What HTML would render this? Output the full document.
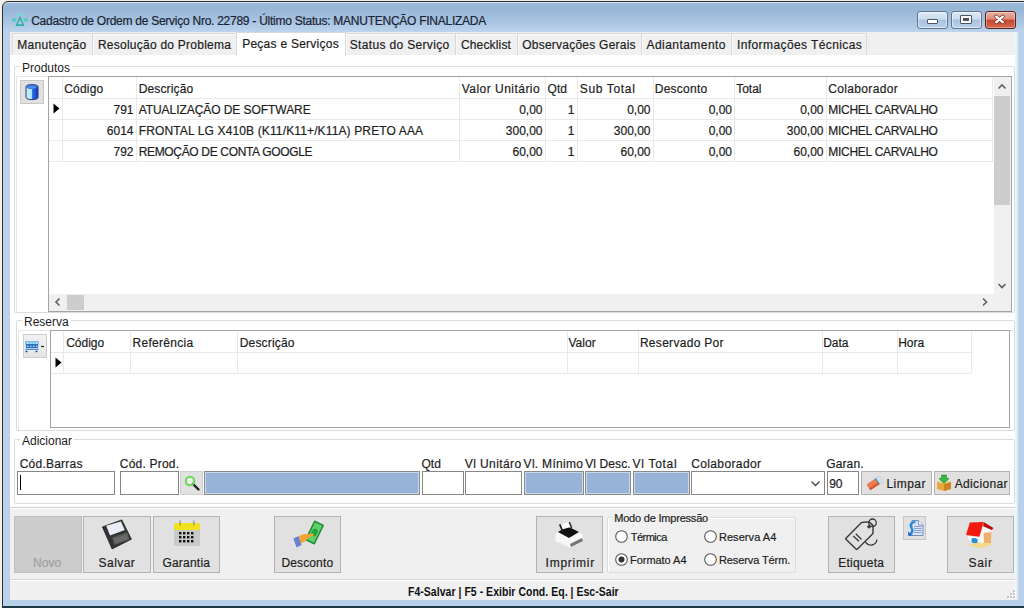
<!DOCTYPE html>
<html><head><meta charset="utf-8"><style>
*{box-sizing:border-box;margin:0;padding:0}
html,body{width:1024px;height:608px;overflow:hidden;background:#f3f1ea;font-family:"Liberation Sans",sans-serif;font-size:12px;color:#1e1e1e}
.a{position:absolute}
.t{position:absolute;white-space:pre;line-height:14px}
.r{text-align:right}
#win{position:absolute;left:2px;top:1px;width:1030px;height:607px;border:1px solid #2b2f36;border-radius:6px 6px 0 0;box-shadow:inset 0 1px 0 #d6e4f2;background:linear-gradient(#9fbad6 0px,#97b6d6 6px,#a6c2e0 18px,#bcd4ec 30px);}
#content{position:absolute;left:10px;top:32px;width:1008px;height:568px;background:#f0f0f0}
#bframe{position:absolute;left:3px;top:600px;width:1021px;height:6px;background:#b8d0ea}
#bline{position:absolute;left:2px;top:606px;width:1022px;height:2px;background:#1d3b44}
#lframe{position:absolute;left:3px;top:30px;width:7px;height:570px;background:#b9d1ea}
#rframe{position:absolute;left:1018px;top:30px;width:6px;height:570px;background:#b9d1ea}
.tab{position:absolute;top:33px;height:22px;background:#f0f0f0;border:1px solid #d9d9d9;border-bottom:none;box-shadow:inset 1px 1px 0 #f8f8f8}
.gb{position:absolute;border:1px solid #dcdcdc;border-radius:2px;box-shadow:inset 1px 1px 0 #fff}
.gbl{position:absolute;background:#fff;padding:0 2px;white-space:pre;line-height:14px}
.grid{position:absolute;background:#fff;border:1px solid #a0a0a0}
.btn{position:absolute;background:#e1e1e1;border:1px solid #adadad}
.inp{position:absolute;background:#fff;border:1px solid #7a7a7a;height:24px;top:471px}
.ro{position:absolute;background:#95b3d7;border:1px solid #8a8a8a;box-shadow:inset 0 0 0 1px #e8eef6;height:24px;top:471px}
.hl{position:absolute;height:1px;background:#f0f0f0}
.vl{position:absolute;width:1px;background:#f0f0f0}
</style></head><body>
<div id="win"></div><div id="lframe"></div><div id="rframe"></div><div id="content"></div>
<svg class="a" style="left:10px;top:11px" width="20" height="16" viewBox="0 0 20 16">
 <rect x="6" y="2.6" width="8" height="1.8" fill="#74dcd6"/>
 <ellipse cx="4.3" cy="8.8" rx="2.4" ry="1.9" fill="#4fcfc4"/>
 <ellipse cx="15.8" cy="8.8" rx="2.4" ry="1.9" fill="#4fcfc4"/>
 <path d="M10 4.8 L14.6 15 L5.4 15 Z M10 8.6 L7.6 13.3 L12.4 13.3 Z" fill="#2fae9f" fill-rule="evenodd"/>
 <path d="M6.5 8.8 L8.4 8.8 M11.6 8.8 L13.5 8.8" stroke="#7fd9d2" stroke-width="1"/>
</svg>
<div class="t" style="left:31.20px;top:14px;letter-spacing:-0.257px;-webkit-text-stroke:0.2px currentColor;color:#1b2433;">Cadastro de Ordem de Serviço Nro. 22789 - Último Status: MANUTENÇÃO FINALIZADA</div>
<div class="a" style="left:917px;top:11px;width:31px;height:18px;border:1px solid #5f7592;border-radius:3px;background:linear-gradient(#dde9f6 0,#c9dbee 45%,#a9c2df 50%,#bcd1ea 100%);box-shadow:inset 0 0 0 1px rgba(255,255,255,.5)"></div>
<div class="a" style="left:927px;top:19px;width:11px;height:5px;background:#fff;border:1px solid #4b5566;border-radius:1px"></div>
<div class="a" style="left:951px;top:11px;width:31px;height:18px;border:1px solid #5f7592;border-radius:3px;background:linear-gradient(#dde9f6 0,#c9dbee 45%,#a9c2df 50%,#bcd1ea 100%);box-shadow:inset 0 0 0 1px rgba(255,255,255,.5)"></div>
<div class="a" style="left:960px;top:15px;width:12px;height:9px;background:#fff;border:1px solid #4b5566;border-radius:1px"></div>
<div class="a" style="left:963px;top:18px;width:6px;height:3px;background:#4b5566"></div>
<div class="a" style="left:985px;top:11px;width:31px;height:18px;border:1px solid #58231f;border-radius:3px;background:linear-gradient(#eab3a5 0,#dd8a76 45%,#c8442c 50%,#d46a4e 100%);box-shadow:inset 0 0 0 1px rgba(255,255,255,.35)"></div>
<svg class="a" style="left:992px;top:13px" width="15" height="13" viewBox="0 0 15 13"><path d="M4.2 3.6 L10.8 9.2 M10.8 3.6 L4.2 9.2" stroke="#7a3a2e" stroke-width="3.8" stroke-linecap="round"/><path d="M4.2 3.6 L10.8 9.2 M10.8 3.6 L4.2 9.2" stroke="#fff" stroke-width="2.3" stroke-linecap="round"/></svg>
<div class="a" style="left:10px;top:55px;width:1007px;height:453px;background:#fff;border-bottom:1px solid #cfcfcf"></div>
<div class="a" style="left:1015px;top:32px;width:3px;height:568px;background:linear-gradient(90deg,#f4f8fc,#dce8f4)"></div>
<div class="a" style="left:10px;top:508px;width:1007px;height:1px;background:#fff"></div>
<div class="a" style="left:12px;top:33px;width:81px;height:22px;background:#f0f0f0;border:1px solid #d9d9d9;border-bottom:none;box-shadow:inset 1px 1px 0 #f9f9f9"></div>
<div class="t" style="left:17.20px;top:38px;letter-spacing:0.328px;-webkit-text-stroke:0.2px currentColor;">Manutenção</div>
<div class="a" style="left:92px;top:33px;width:145px;height:22px;background:#f0f0f0;border:1px solid #d9d9d9;border-bottom:none;box-shadow:inset 1px 1px 0 #f9f9f9"></div>
<div class="t" style="left:97.95px;top:38px;letter-spacing:0.246px;-webkit-text-stroke:0.2px currentColor;">Resolução do Problema</div>
<div class="a" style="left:345px;top:33px;width:111px;height:22px;background:#f0f0f0;border:1px solid #d9d9d9;border-bottom:none;box-shadow:inset 1px 1px 0 #f9f9f9"></div>
<div class="t" style="left:349.70px;top:38px;letter-spacing:0.341px;-webkit-text-stroke:0.2px currentColor;">Status do Serviço</div>
<div class="a" style="left:455px;top:33px;width:63px;height:22px;background:#f0f0f0;border:1px solid #d9d9d9;border-bottom:none;box-shadow:inset 1px 1px 0 #f9f9f9"></div>
<div class="t" style="left:460.95px;top:38px;letter-spacing:0.165px;-webkit-text-stroke:0.2px currentColor;">Checklist</div>
<div class="a" style="left:517px;top:33px;width:125px;height:22px;background:#f0f0f0;border:1px solid #d9d9d9;border-bottom:none;box-shadow:inset 1px 1px 0 #f9f9f9"></div>
<div class="t" style="left:522.20px;top:38px;letter-spacing:0.237px;-webkit-text-stroke:0.2px currentColor;">Observações Gerais</div>
<div class="a" style="left:641px;top:33px;width:91px;height:22px;background:#f0f0f0;border:1px solid #d9d9d9;border-bottom:none;box-shadow:inset 1px 1px 0 #f9f9f9"></div>
<div class="t" style="left:646.50px;top:38px;letter-spacing:0.450px;-webkit-text-stroke:0.2px currentColor;">Adiantamento</div>
<div class="a" style="left:731px;top:33px;width:136px;height:22px;background:#f0f0f0;border:1px solid #d9d9d9;border-bottom:none;box-shadow:inset 1px 1px 0 #f9f9f9"></div>
<div class="t" style="left:737.00px;top:38px;letter-spacing:0.402px;-webkit-text-stroke:0.2px currentColor;">Informações Técnicas</div>
<div class="a" style="left:236px;top:32px;width:110px;height:24px;background:#fff;border:1px solid #d9d9d9;border-bottom:none"></div>
<div class="t" style="left:242.20px;top:37px;letter-spacing:0.253px;-webkit-text-stroke:0.2px currentColor;">Peças e Serviços</div>
<div class="a" style="left:14px;top:66px;width:1001px;height:247px;border:1px solid #dcdcdc;border-radius:2px;box-shadow:inset 1px 1px 0 #fff"></div>
<div class="t" style="left:20px;top:61px;background:#fff;padding:0 2px">Produtos</div>
<div class="a" style="left:16px;top:320px;width:999px;height:111px;border:1px solid #dcdcdc;border-radius:2px;box-shadow:inset 1px 1px 0 #fff"></div>
<div class="t" style="left:22px;top:315px;background:#fff;padding:0 2px">Reserva</div>
<div class="a" style="left:14px;top:439px;width:1001px;height:65px;border:1px solid #dcdcdc;border-radius:2px;box-shadow:inset 1px 1px 0 #fff"></div>
<div class="t" style="left:20px;top:434px;background:#fff;padding:0 2px">Adicionar</div>
<div class="a" style="left:16px;top:76px;width:997px;height:236px;border-left:1px solid #e6e6e6;border-top:1px solid #e6e6e6"></div>
<div class="a" style="left:20px;top:80px;width:24px;height:24px;background:#e1e1e1;border:1px solid #c8c8c8"></div>
<svg class="a" style="left:24px;top:83px" width="16" height="18" viewBox="0 0 16 18">
<defs><linearGradient id="dbg" x1="0" x2="1" y1="0" y2="0"><stop offset="0" stop-color="#c8eefc"/><stop offset="0.45" stop-color="#b6e6fa"/><stop offset="0.55" stop-color="#2a6ee0"/><stop offset="1" stop-color="#1438b8"/></linearGradient></defs>
<path d="M2 3.5 C2 1 14 1 14 3.5 L14 14.5 C14 17.3 2 17.3 2 14.5 Z" fill="url(#dbg)" stroke="#263c7a" stroke-width="1"/>
<ellipse cx="8" cy="3.8" rx="5.6" ry="2.3" fill="#2f6fd8"/>
<ellipse cx="8" cy="4.2" rx="4.2" ry="1.3" fill="#4f8ff0"/>
</svg>
<div class="a" style="left:48px;top:76px;width:964px;height:236px;background:#fff;border:1px solid #a3a3a3"></div>
<div class="a" style="left:62px;top:77px;width:1px;height:84px;background:#e9e9e9"></div>
<div class="a" style="left:136px;top:77px;width:1px;height:84px;background:#e9e9e9"></div>
<div class="a" style="left:459px;top:77px;width:1px;height:84px;background:#e9e9e9"></div>
<div class="a" style="left:545px;top:77px;width:1px;height:84px;background:#e9e9e9"></div>
<div class="a" style="left:577px;top:77px;width:1px;height:84px;background:#e9e9e9"></div>
<div class="a" style="left:653px;top:77px;width:1px;height:84px;background:#e9e9e9"></div>
<div class="a" style="left:734px;top:77px;width:1px;height:84px;background:#e9e9e9"></div>
<div class="a" style="left:826px;top:77px;width:1px;height:84px;background:#e9e9e9"></div>
<div class="a" style="left:992px;top:77px;width:1px;height:84px;background:#e9e9e9"></div>
<div class="a" style="left:49px;top:98px;width:944px;height:1px;background:#e9e9e9"></div>
<div class="a" style="left:49px;top:119px;width:944px;height:1px;background:#e9e9e9"></div>
<div class="a" style="left:49px;top:140px;width:944px;height:1px;background:#e9e9e9"></div>
<div class="a" style="left:49px;top:161px;width:944px;height:1px;background:#e9e9e9"></div>
<div class="t" style="left:64.20px;top:82px;letter-spacing:0.194px;-webkit-text-stroke:0.2px currentColor;">Código</div>
<div class="t" style="left:138.70px;top:82px;letter-spacing:0.144px;-webkit-text-stroke:0.2px currentColor;">Descrição</div>
<div class="t" style="left:461.70px;top:82px;letter-spacing:0.476px;-webkit-text-stroke:0.2px currentColor;">Valor Unitário</div>
<div class="t" style="left:547.60px;top:82px;-webkit-text-stroke:0.2px currentColor;">Qtd</div>
<div class="t" style="left:579.80px;top:82px;letter-spacing:0.648px;-webkit-text-stroke:0.2px currentColor;">Sub Total</div>
<div class="t" style="left:654.80px;top:82px;letter-spacing:0.243px;-webkit-text-stroke:0.2px currentColor;">Desconto</div>
<div class="t" style="left:736.20px;top:82px;-webkit-text-stroke:0.2px currentColor;">Total</div>
<div class="t" style="left:828.20px;top:82px;letter-spacing:0.346px;-webkit-text-stroke:0.2px currentColor;">Colaborador</div>
<div class="t r" style="left:-166.5px;width:300px;top:103px;-webkit-text-stroke:0.2px currentColor;">791</div>
<div class="t" style="left:138.70px;top:103px;letter-spacing:-0.061px;-webkit-text-stroke:0.2px currentColor;">ATUALIZAÇÃO DE SOFTWARE</div>
<div class="t r" style="left:242.5px;width:300px;top:103px;-webkit-text-stroke:0.2px currentColor;">0,00</div>
<div class="t r" style="left:274.5px;width:300px;top:103px;-webkit-text-stroke:0.2px currentColor;">1</div>
<div class="t r" style="left:350.5px;width:300px;top:103px;-webkit-text-stroke:0.2px currentColor;">0,00</div>
<div class="t r" style="left:432px;width:300px;top:103px;-webkit-text-stroke:0.2px currentColor;">0,00</div>
<div class="t r" style="left:523.5px;width:300px;top:103px;-webkit-text-stroke:0.2px currentColor;">0,00</div>
<div class="t" style="left:828.20px;top:103px;letter-spacing:-0.246px;-webkit-text-stroke:0.2px currentColor;">MICHEL CARVALHO</div>
<div class="t r" style="left:-166.5px;width:300px;top:124px;-webkit-text-stroke:0.2px currentColor;">6014</div>
<div class="t" style="left:138.70px;top:124px;letter-spacing:0.134px;-webkit-text-stroke:0.2px currentColor;">FRONTAL LG X410B (K11/K11+/K11A) PRETO AAA</div>
<div class="t r" style="left:242.5px;width:300px;top:124px;-webkit-text-stroke:0.2px currentColor;">300,00</div>
<div class="t r" style="left:274.5px;width:300px;top:124px;-webkit-text-stroke:0.2px currentColor;">1</div>
<div class="t r" style="left:350.5px;width:300px;top:124px;-webkit-text-stroke:0.2px currentColor;">300,00</div>
<div class="t r" style="left:432px;width:300px;top:124px;-webkit-text-stroke:0.2px currentColor;">0,00</div>
<div class="t r" style="left:523.5px;width:300px;top:124px;-webkit-text-stroke:0.2px currentColor;">300,00</div>
<div class="t" style="left:828.20px;top:124px;letter-spacing:-0.246px;-webkit-text-stroke:0.2px currentColor;">MICHEL CARVALHO</div>
<div class="t r" style="left:-166.5px;width:300px;top:145px;-webkit-text-stroke:0.2px currentColor;">792</div>
<div class="t" style="left:138.70px;top:145px;letter-spacing:-0.334px;-webkit-text-stroke:0.2px currentColor;">REMOÇÃO DE CONTA GOOGLE</div>
<div class="t r" style="left:242.5px;width:300px;top:145px;-webkit-text-stroke:0.2px currentColor;">60,00</div>
<div class="t r" style="left:274.5px;width:300px;top:145px;-webkit-text-stroke:0.2px currentColor;">1</div>
<div class="t r" style="left:350.5px;width:300px;top:145px;-webkit-text-stroke:0.2px currentColor;">60,00</div>
<div class="t r" style="left:432px;width:300px;top:145px;-webkit-text-stroke:0.2px currentColor;">0,00</div>
<div class="t r" style="left:523.5px;width:300px;top:145px;-webkit-text-stroke:0.2px currentColor;">60,00</div>
<div class="t" style="left:828.20px;top:145px;letter-spacing:-0.246px;-webkit-text-stroke:0.2px currentColor;">MICHEL CARVALHO</div>
<svg class="a" style="left:53px;top:103px" width="8" height="12"><path d="M0.5 0.5 L6.5 5.5 L0.5 10.5 Z" fill="#000"/></svg>
<div class="a" style="left:994px;top:77px;width:17px;height:217px;background:#f0f0f0"></div>
<div class="a" style="left:994px;top:96px;width:16px;height:109px;background:#cdcdcd"></div>
<svg class="a" style="left:997px;top:83px" width="10" height="8"><path d="M1.5 5.5 L5 2 L8.5 5.5" stroke="#606060" stroke-width="1.6" fill="none"/></svg>
<svg class="a" style="left:997px;top:282px" width="10" height="8"><path d="M1.5 2 L5 5.5 L8.5 2" stroke="#606060" stroke-width="1.6" fill="none"/></svg>
<div class="a" style="left:49px;top:294px;width:962px;height:17px;background:#f0f0f0"></div>
<div class="a" style="left:67px;top:295px;width:17px;height:15px;background:#cdcdcd"></div>
<svg class="a" style="left:54px;top:297px" width="8" height="10"><path d="M5.5 1.5 L2 5 L5.5 8.5" stroke="#606060" stroke-width="1.6" fill="none"/></svg>
<svg class="a" style="left:981px;top:297px" width="8" height="10"><path d="M2 1.5 L5.5 5 L2 8.5" stroke="#606060" stroke-width="1.6" fill="none"/></svg>
<div class="a" style="left:18px;top:330px;width:995px;height:100px;border-left:1px solid #e6e6e6;border-top:1px solid #e6e6e6"></div>
<div class="a" style="left:23px;top:334px;width:24px;height:24px;background:linear-gradient(#f2f2f2,#e4e4e4);border:1px solid #cdcdcd"></div>
<svg class="a" style="left:23px;top:337px" width="22" height="18" viewBox="0 0 22 18">
<path d="M2.5 4 L15.5 4 L15 11 L3 11 Z" fill="#2a74b8"/>
<path d="M2.5 4 L15.5 4 L15.3 7 L2.7 7 Z" fill="#7cc2f0"/>
<g fill="#e6f4ff"><circle cx="4.8" cy="6.3" r="0.8"/><circle cx="7.8" cy="6.3" r="0.8"/><circle cx="10.8" cy="6.3" r="0.8"/><circle cx="13.8" cy="6.3" r="0.8"/>
<circle cx="4.8" cy="9.3" r="0.7"/><circle cx="7.8" cy="9.3" r="0.7"/><circle cx="10.8" cy="9.3" r="0.7"/><circle cx="13.8" cy="9.3" r="0.7"/></g>
<path d="M2.5 12.3 L15.5 12.3" stroke="#4a90d0" stroke-width="1.3"/>
<path d="M2.5 14.5 L4.5 14.5 M12.5 14.5 L14.5 14.5" stroke="#1f4f80" stroke-width="1.4"/>
<path d="M18 9.5 H21" stroke="#222" stroke-width="1.2"/>
</svg>
<div class="a" style="left:50px;top:330px;width:960px;height:98px;background:#fff;border:1px solid #a3a3a3"></div>
<div class="a" style="left:63px;top:331px;width:1px;height:42px;background:#e9e9e9"></div>
<div class="a" style="left:130px;top:331px;width:1px;height:42px;background:#e9e9e9"></div>
<div class="a" style="left:237px;top:331px;width:1px;height:42px;background:#e9e9e9"></div>
<div class="a" style="left:567px;top:331px;width:1px;height:42px;background:#e9e9e9"></div>
<div class="a" style="left:638px;top:331px;width:1px;height:42px;background:#e9e9e9"></div>
<div class="a" style="left:822px;top:331px;width:1px;height:42px;background:#e9e9e9"></div>
<div class="a" style="left:897px;top:331px;width:1px;height:42px;background:#e9e9e9"></div>
<div class="a" style="left:971px;top:331px;width:1px;height:42px;background:#e9e9e9"></div>
<div class="a" style="left:51px;top:352px;width:920px;height:1px;background:#e9e9e9"></div>
<div class="a" style="left:51px;top:373px;width:920px;height:1px;background:#e9e9e9"></div>
<div class="t" style="left:66.20px;top:336px;-webkit-text-stroke:0.2px currentColor;">Código</div>
<div class="t" style="left:132.60px;top:336px;letter-spacing:0.285px;-webkit-text-stroke:0.2px currentColor;">Referência</div>
<div class="t" style="left:239.80px;top:336px;letter-spacing:0.156px;-webkit-text-stroke:0.2px currentColor;">Descrição</div>
<div class="t" style="left:568.50px;top:336px;-webkit-text-stroke:0.2px currentColor;">Valor</div>
<div class="t" style="left:639.90px;top:336px;letter-spacing:0.305px;-webkit-text-stroke:0.2px currentColor;">Reservado Por</div>
<div class="t" style="left:823.20px;top:336px;-webkit-text-stroke:0.2px currentColor;">Data</div>
<div class="t" style="left:898.20px;top:336px;-webkit-text-stroke:0.2px currentColor;">Hora</div>
<svg class="a" style="left:55px;top:357px" width="8" height="12"><path d="M0.5 0.5 L6.5 5.5 L0.5 10.5 Z" fill="#000"/></svg>
<div class="t" style="left:19.70px;top:457px;letter-spacing:0.234px;-webkit-text-stroke:0.2px currentColor;">Cód.Barras</div>
<div class="t" style="left:119.80px;top:457px;letter-spacing:0.204px;-webkit-text-stroke:0.2px currentColor;">Cód. Prod.</div>
<div class="t" style="left:421.50px;top:457px;-webkit-text-stroke:0.2px currentColor;">Qtd</div>
<div class="t" style="left:464.80px;top:457px;letter-spacing:0.412px;-webkit-text-stroke:0.2px currentColor;">Vl Unitáro</div>
<div class="t" style="left:523.60px;top:457px;letter-spacing:0.291px;-webkit-text-stroke:0.2px currentColor;">Vl. Mínimo</div>
<div class="t" style="left:585.20px;top:457px;letter-spacing:0.103px;-webkit-text-stroke:0.2px currentColor;">Vl Desc.</div>
<div class="t" style="left:632.60px;top:457px;letter-spacing:0.695px;-webkit-text-stroke:0.2px currentColor;">Vl Total</div>
<div class="t" style="left:691.20px;top:457px;letter-spacing:0.376px;-webkit-text-stroke:0.2px currentColor;">Colaborador</div>
<div class="t" style="left:826.20px;top:457px;letter-spacing:0.143px;-webkit-text-stroke:0.2px currentColor;">Garan.</div>
<div class="a" style="left:17px;top:471px;width:98px;height:24px;background:#fff;border:1px solid #868686"></div>
<div class="a" style="left:20px;top:475px;width:1px;height:15px;background:#000"></div>
<div class="a" style="left:120px;top:471px;width:59px;height:24px;background:#fff;border:1px solid #868686"></div>
<div class="a" style="left:180px;top:471px;width:23px;height:24px;background:#e1e1e1;border:1px solid #d0d0d0"></div>
<svg class="a" style="left:183px;top:474px" width="18" height="18" viewBox="0 0 18 18"><path d="M10 10 L15.5 15.5" stroke="#222" stroke-width="2.4" stroke-linecap="round"/><circle cx="7" cy="7" r="4.3" fill="none" stroke="#6fd65c" stroke-width="2"/><circle cx="7" cy="7" r="2.4" fill="#e9f7e6"/></svg>
<div class="a" style="left:204px;top:471px;width:216px;height:24px;background:#97b4d8;border:1px solid #8a8a8a;box-shadow:inset 0 0 0 1px #c9d9ec"></div>
<div class="a" style="left:422px;top:471px;width:42px;height:24px;background:#fff;border:1px solid #868686"></div>
<div class="a" style="left:465px;top:471px;width:57px;height:24px;background:#fff;border:1px solid #868686"></div>
<div class="a" style="left:524px;top:471px;width:60px;height:24px;background:#97b4d8;border:1px solid #8a8a8a;box-shadow:inset 0 0 0 1px #c9d9ec"></div>
<div class="a" style="left:585px;top:471px;width:46px;height:24px;background:#97b4d8;border:1px solid #8a8a8a;box-shadow:inset 0 0 0 1px #c9d9ec"></div>
<div class="a" style="left:633px;top:471px;width:57px;height:24px;background:#97b4d8;border:1px solid #8a8a8a;box-shadow:inset 0 0 0 1px #c9d9ec"></div>
<div class="a" style="left:691px;top:471px;width:134px;height:24px;background:#fff;border:1px solid #868686"></div>
<svg class="a" style="left:810px;top:480px" width="11" height="8"><path d="M1.5 1.5 L5.5 5.5 L9.5 1.5" stroke="#444" stroke-width="1.3" fill="none"/></svg>
<div class="a" style="left:827px;top:471px;width:32px;height:24px;background:#fff;border:1px solid #868686"></div>
<div class="t" style="left:829.20px;top:477px;-webkit-text-stroke:0.2px currentColor;">90</div>
<div class="a" style="left:861px;top:471px;width:71px;height:24px;background:#e1e1e1;border:1px solid #b3b3b3"></div>
<svg class="a" style="left:865px;top:475px" width="20" height="16" viewBox="0 0 20 16">
<g transform="rotate(-33 10 8)"><rect x="2" y="4.5" width="16" height="7" rx="1.2" fill="#ef7b50"/><rect x="13" y="4.5" width="5" height="7" rx="1" fill="#cfe4f5"/><rect x="12" y="4.5" width="1.6" height="7" fill="#4e9ad6"/><rect x="2" y="9.5" width="11" height="2" fill="#d25a32"/></g>
</svg>
<div class="t" style="left:886.50px;top:477px;letter-spacing:0.444px;-webkit-text-stroke:0.2px currentColor;">Limpar</div>
<div class="a" style="left:934px;top:471px;width:76px;height:24px;background:#e1e1e1;border:1px solid #b3b3b3"></div>
<svg class="a" style="left:936px;top:474px" width="16" height="18" viewBox="0 0 16 18">
<path d="M1 8 L8 6 L15 8 L15 15 L8 17 L1 15 Z" fill="#e8a93c"/>
<path d="M1 8 L8 10 L15 8 L8 6 Z" fill="#f6d38a"/>
<path d="M8 10 L8 17 L15 15 L15 8 Z" fill="#c98524"/>
<path d="M5.5 1 L10.5 1 L10.5 4.5 L13 4.5 L8 9.5 L3 4.5 L5.5 4.5 Z" fill="#39b54a" stroke="#1f8a2e" stroke-width="0.6"/>
</svg>
<div class="t" style="left:954.70px;top:477px;letter-spacing:0.347px;-webkit-text-stroke:0.2px currentColor;">Adicionar</div>
<div class="a" style="left:14px;top:516px;width:68px;height:57px;background:#cccccc;border:1px solid #bfbfbf"></div>
<div class="t" style="left:33.00px;top:556px;letter-spacing:0.062px;-webkit-text-stroke:0.2px currentColor;color:#a0a0a0;">Novo</div>
<div class="a" style="left:83px;top:516px;width:68px;height:57px;background:#e1e1e1;border:1px solid #b3b3b3"></div>
<div class="t" style="left:98.60px;top:556px;letter-spacing:0.437px;-webkit-text-stroke:0.2px currentColor;">Salvar</div>
<div class="a" style="left:153px;top:516px;width:67px;height:57px;background:#e1e1e1;border:1px solid #b3b3b3"></div>
<div class="t" style="left:162.40px;top:556px;letter-spacing:0.225px;-webkit-text-stroke:0.2px currentColor;">Garantia</div>
<div class="a" style="left:274px;top:516px;width:67px;height:57px;background:#e1e1e1;border:1px solid #b3b3b3"></div>
<div class="t" style="left:281.40px;top:556px;letter-spacing:0.143px;-webkit-text-stroke:0.2px currentColor;">Desconto</div>
<div class="a" style="left:536px;top:516px;width:67px;height:57px;background:#e1e1e1;border:1px solid #b3b3b3"></div>
<div class="t" style="left:545.60px;top:556px;letter-spacing:0.754px;-webkit-text-stroke:0.2px currentColor;">Imprimir</div>
<div class="a" style="left:828px;top:516px;width:67px;height:57px;background:#e1e1e1;border:1px solid #b3b3b3"></div>
<div class="t" style="left:838.20px;top:556px;letter-spacing:0.238px;-webkit-text-stroke:0.2px currentColor;">Etiqueta</div>
<div class="a" style="left:947px;top:516px;width:67px;height:57px;background:#e1e1e1;border:1px solid #b3b3b3"></div>
<div class="t" style="left:968.60px;top:556px;letter-spacing:0.653px;-webkit-text-stroke:0.2px currentColor;">Sair</div>
<svg class="a" style="left:100px;top:518px" width="34" height="34" viewBox="0 0 34 34">
<path d="M2.4 8.9 L21.8 1.9 L31.4 21.2 L12.1 30.9 Z" fill="#333" stroke="#222" stroke-width="0.8" stroke-linejoin="round"/>
<path d="M6.2 7.8 L20.9 3.5 L24.8 12.1 L10 17.5 Z" fill="#e8ecf4"/>
<path d="M12.1 19.6 L27.1 14.3 L29.6 21.4 L14.3 27.1 Z" fill="#5c5c5c"/>
<path d="M14 21 L26.5 16.5 L28 20.8 L15.5 25.3 Z" fill="#6a6a6a"/>
</svg>
<svg class="a" style="left:173px;top:520px" width="28" height="27" viewBox="0 0 28 27">
<rect x="1" y="3" width="26" height="23" rx="2" fill="#c9c9c9"/>
<rect x="1" y="3" width="26" height="7" rx="2" fill="#f2e21b"/>
<rect x="6.5" y="0.5" width="1.2" height="5" fill="#8a8a8a"/><rect x="20.3" y="0.5" width="1.2" height="5" fill="#8a8a8a"/>
<g fill="#111">
<rect x="6" y="12" width="2.4" height="2.4"/><rect x="10" y="12" width="2.4" height="2.4"/><rect x="14" y="12" width="2.4" height="2.4"/><rect x="18" y="12" width="2.4" height="2.4"/>
<rect x="6" y="16" width="2.4" height="2.4"/><rect x="10" y="16" width="2.4" height="2.4"/><rect x="14" y="16" width="2.4" height="2.4"/><rect x="18" y="16" width="2.4" height="2.4"/>
<rect x="6" y="20" width="2.4" height="2.4"/><rect x="10" y="20" width="2.4" height="2.4"/><rect x="14" y="20" width="2.4" height="2.4"/><rect x="18" y="20" width="2.4" height="2.4"/>
</g></svg>
<svg class="a" style="left:291px;top:519px" width="34" height="30" viewBox="0 0 34 30">
<g transform="rotate(-64 23.5 13.5)"><rect x="12.5" y="8" width="22" height="11" rx="0.8" fill="#1f8a35"/><rect x="14" y="9.5" width="19" height="8" fill="#5fcf6a"/><ellipse cx="23.5" cy="13.5" rx="4" ry="3" fill="#27a13c"/></g>
<path d="M8 17.5 C11 15 14 14.5 16 15.5 L21.5 14.5 C23 14.5 23 16.5 21.5 17 L17 19 C15 22 12 24 9.5 24.5 Z" fill="#f5a431"/>
<path d="M2.5 19.5 L7.5 17 L10.5 26 L5.5 28.5 Z" fill="#6a7fd0"/>
</svg>
<svg class="a" style="left:552px;top:520px" width="34" height="30" viewBox="0 0 34 30">
<path d="M3 14 L14 6 L31 14 L31 21 L18 28 L3 21 Z" fill="#f7f7f7" stroke="#e4e4e4" stroke-width="0.8"/>
<path d="M6 12 L15 6 L27 12 L17 18 Z" fill="#111"/>
<path d="M8 10 L11 4 L18 1.5 L19 7 Z" fill="#fcfcfc"/><path d="M17.5 2.5 L19.5 7.5" stroke="#333" stroke-width="1.6" stroke-linecap="round"/>
<path d="M18 24 L30 18 L31 21 L19 27 Z" fill="#777"/>
<path d="M8 5 L10.5 11" stroke="#222" stroke-width="1.8" stroke-linecap="round"/>
</svg>
<svg class="a" style="left:844px;top:518px" width="36" height="34" viewBox="0 0 36 34">
<path d="M1.7 20.6 L17.5 4.6 Q18 4.2 19 4.2 L25 3.9 L29 7.4 L29 14.9 Q29 15.6 28.3 16.3 L13.4 31.1 Q12.7 31.8 12 31.1 L2.2 21.4 Q1.5 20.8 1.7 20.6 Z" fill="none" stroke="#3a3a3a" stroke-width="1.4" stroke-linejoin="round"/>
<circle cx="28.5" cy="4.8" r="3.8" fill="none" stroke="#3a3a3a" stroke-width="1.3"/>
<circle cx="25" cy="8.7" r="1.7" fill="#3a3a3a"/>
<path d="M9.2 18 L14.9 23.2 M11.8 15.8 L17.5 21.5" stroke="#3a3a3a" stroke-width="1.3"/>
<path d="M21.5 24.1 Q24 27.5 28 27 Q32.5 26 32.9 21.5" fill="none" stroke="#3a3a3a" stroke-width="1.3"/>
</svg>
<div class="a" style="left:903px;top:516px;width:23px;height:24px;background:#e1e1e1;border:1px solid #c8c8c8"></div>
<svg class="a" style="left:906px;top:518px" width="18" height="20" viewBox="0 0 18 20">
<path d="M6 2.5 L12.5 2.5 L17 7 L17 17.5 L6 17.5 Z" fill="#d8e4f6" stroke="#6c84b4" stroke-width="0.9"/>
<path d="M12.5 2.5 L12.5 7 L17 7" fill="#f4f8fd" stroke="#6c84b4" stroke-width="0.8"/>
<path d="M8 8.5 H15.5 M8 10.5 H15.5 M8 12.5 H15.5 M8 14.5 H15.5" stroke="#7f9bd0" stroke-width="0.9"/>
<path d="M9.5 4 C5 4 3.5 7 5.5 10 C7 12.5 6 14.5 4.5 15.5" fill="none" stroke="#1c86e0" stroke-width="2.2"/>
<path d="M2 13.5 L6.5 17.5 L2.5 18 Z" fill="#0f5fc0"/>
</svg>
<svg class="a" style="left:963px;top:519px" width="34" height="31" viewBox="0 0 34 31">
<path d="M4 17 L16.4 18 L20.6 8 L28.5 11.5 L28 25 L9 25 Z" fill="#fbfbfb"/>
<path d="M20.6 14 L28.5 13 L28 24.5 L21 24.5 Z" fill="#eeb06c"/>
<path d="M8.5 19.5 C10 18.5 14 18.8 14.8 20.5 L14.5 24.5 C12 25 9.5 24.5 8.5 23 Z" fill="#2d8fd4"/>
<path d="M3.5 25.5 L16 23.5 L30 24.5 L18.5 29.5 Z" fill="#f3d98a"/>
<path d="M3 16 L6.8 3.5 L20.6 2.9 L16.4 17.7 Z" fill="#f21a10"/>
<path d="M20.6 2.9 L30.5 9.1 L28.9 10.9 L20.2 7.2 Z" fill="#b5100c"/>
</svg>
<div class="a" style="left:607px;top:517px;width:189px;height:56px;border:1px solid #dcdcdc;border-radius:2px;box-shadow:inset 1px 1px 0 #fff"></div>
<div class="t" style="left:612.20px;top:511px;font-size:11px;letter-spacing:-0.201px;-webkit-text-stroke:0.2px currentColor;background:#f0f0f0;padding:0 2px;">Modo de Impressão</div>
<svg class="a" style="left:615.0px;top:530.0px" width="13" height="13"><circle cx="6.5" cy="6.5" r="5.8" fill="#fff" stroke="#555" stroke-width="1.1"/></svg>
<div class="t" style="left:630.80px;top:530px;font-size:11px;letter-spacing:-0.537px;-webkit-text-stroke:0.2px currentColor;">Térmica</div>
<svg class="a" style="left:615.0px;top:553.0px" width="13" height="13"><circle cx="6.5" cy="6.5" r="5.8" fill="#fff" stroke="#555" stroke-width="1.1"/><circle cx="6.5" cy="6.5" r="3" fill="#333"/></svg>
<div class="t" style="left:630.00px;top:553px;font-size:11px;letter-spacing:-0.040px;-webkit-text-stroke:0.2px currentColor;">Formato A4</div>
<svg class="a" style="left:704.3px;top:530.0px" width="13" height="13"><circle cx="6.5" cy="6.5" r="5.8" fill="#fff" stroke="#555" stroke-width="1.1"/></svg>
<div class="t" style="left:718.90px;top:530px;font-size:11px;letter-spacing:0.071px;-webkit-text-stroke:0.2px currentColor;">Reserva A4</div>
<svg class="a" style="left:704.3px;top:553.0px" width="13" height="13"><circle cx="6.5" cy="6.5" r="5.8" fill="#fff" stroke="#555" stroke-width="1.1"/></svg>
<div class="t" style="left:718.90px;top:553px;font-size:11px;letter-spacing:-0.095px;-webkit-text-stroke:0.2px currentColor;">Reserva Térm.</div>
<div class="a" style="left:10px;top:579px;width:1007px;height:1px;background:#d8d8d8"></div>
<div class="a" style="left:10px;top:580px;width:1007px;height:1px;background:#fff"></div>
<div class="t" style="left:408px;top:585px;font-weight:bold;color:#111;transform:scaleX(0.872);transform-origin:0 0;letter-spacing:0.05px">F4-Salvar | F5 - Exibir Cond. Eq. | Esc-Sair</div>
<div class="a" style="left:1014px;top:591px;width:2px;height:2px;background:#fff"></div>
<div class="a" style="left:1013px;top:590px;width:2px;height:2px;background:#c6c6c6"></div>
<div class="a" style="left:1011px;top:594px;width:2px;height:2px;background:#fff"></div>
<div class="a" style="left:1010px;top:593px;width:2px;height:2px;background:#c6c6c6"></div>
<div class="a" style="left:1014px;top:594px;width:2px;height:2px;background:#fff"></div>
<div class="a" style="left:1013px;top:593px;width:2px;height:2px;background:#c6c6c6"></div>
<div class="a" style="left:1008px;top:597px;width:2px;height:2px;background:#fff"></div>
<div class="a" style="left:1007px;top:596px;width:2px;height:2px;background:#c6c6c6"></div>
<div class="a" style="left:1011px;top:597px;width:2px;height:2px;background:#fff"></div>
<div class="a" style="left:1010px;top:596px;width:2px;height:2px;background:#c6c6c6"></div>
<div class="a" style="left:1014px;top:597px;width:2px;height:2px;background:#fff"></div>
<div class="a" style="left:1013px;top:596px;width:2px;height:2px;background:#c6c6c6"></div>
<div id="bframe"></div><div id="bline"></div>
</body></html>
